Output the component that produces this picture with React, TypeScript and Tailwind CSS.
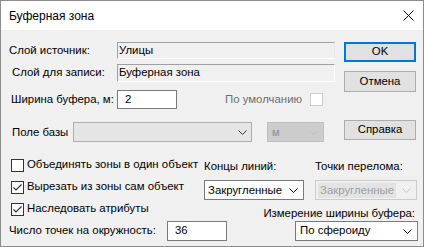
import React from "react";

function Chevron({ className = "" }: { className?: string }) {
  return (
    <svg width="9" height="5" viewBox="0 0 9 5" className={className}>
      <path d="M0.5 0.5 L4.5 4.5 L8.5 0.5" fill="none" stroke="currentColor" strokeWidth="1" />
    </svg>
  );
}

function CheckBox({ checked = false, disabled = false }: { checked?: boolean; disabled?: boolean }) {
  return (
    <span
      className={`flex h-[13px] w-[13px] shrink-0 items-center justify-center border bg-white ${
        disabled ? "border-[#cccccc]" : "border-[#333333]"
      }`}
    >
      {checked && (
        <svg width="11" height="11" viewBox="0 0 11 11">
          <path d="M1.5 5.5 L4 8 L9.5 2.5" fill="none" stroke="#333333" strokeWidth="1.2" />
        </svg>
      )}
    </span>
  );
}

export default function App() {
  return (
    <div
      className="flex h-[247px] w-[424px] flex-col whitespace-nowrap border border-[#8c8c8c] bg-[#f0f0f0] text-[11.4px] leading-none text-black"
      style={{ fontFamily: '"Liberation Sans", Arial, sans-serif' }}
    >
      {/* TITLE BAR */}
      <div className="flex h-[29px] shrink-0 items-center justify-between bg-white pl-[8px] pr-[9px] text-[12px]">
        <span>Буферная зона</span>
        <svg width="11" height="11" viewBox="0 0 11 11">
          <path d="M0.5 0.5 L10.5 10.5 M10.5 0.5 L0.5 10.5" stroke="#000" strokeWidth="1" />
        </svg>
      </div>

      {/* TOP SECTION */}
      <div className="mt-[12px] flex pl-[8px]">
        <div className="flex w-[326px] flex-col">
          <div className="flex h-[17px] items-center">
            <span className="w-[108px] shrink-0">Слой источник:</span>
            <div className="flex h-[17px] w-[218px] items-center border border-b-white border-l-[#a0a0a0] border-r-[#e8e8e8] border-t-[#a0a0a0] pl-[1px]">
              Улицы
            </div>
          </div>
          <div className="mt-[5px] flex h-[18px] items-center">
            <span className="w-[108px] shrink-0 pl-[3px]">Слой для записи:</span>
            <div className="flex h-[18px] w-[218px] items-center border border-b-white border-l-[#a0a0a0] border-r-white border-t-[#a0a0a0] pl-[1px]">
              Буферная зона
            </div>
          </div>
          <div className="mt-[8px] flex h-[19px] items-center">
            <span className="w-[108px] shrink-0 pl-[2px]">Ширина буфера, м:</span>
            <div className="flex h-[19px] w-[60px] items-center border border-[#7a7a7a] bg-white pl-[7px]">2</div>
            <span className="ml-[48px] text-[#6d6d6d]">По умолчанию</span>
            <span className="ml-auto mr-[12px]">
              <CheckBox disabled />
            </span>
          </div>
        </div>
        <div className="ml-[9px] flex flex-col">
          <div className="flex h-[20px] w-[72px] items-center justify-center border-2 border-[#0078d7] bg-[#e1e1e1]">OK</div>
          <div className="mt-[9px] flex h-[21px] w-[72px] items-center justify-center border border-[#adadad] bg-[#e1e1e1]">
            Отмена
          </div>
        </div>
      </div>

      {/* FIELD ROW */}
      <div className="mt-[11px] flex h-[22px] items-start pl-[11px]">
        <span className="mt-[7px] w-[61px] shrink-0">Поле базы</span>
        <div className="mt-[2px] flex h-[20px] w-[179px] items-center justify-end border border-[#adadad] bg-[#e5e5e5] pr-[4px] text-[#333]">
          <Chevron />
        </div>
        <div className="ml-[15px] mt-[2px] flex h-[20px] w-[57px] items-center justify-between border border-[#bfbfbf] bg-[#cccccc] pl-[4px] pr-[5px] text-[#8a8a9a]">
          <span className="text-[11px]">м</span>
          <span className="text-[#bcbcbc]">
            <Chevron />
          </span>
        </div>
        <div className="ml-[20px] flex h-[20px] w-[72px] items-center justify-center border border-[#adadad] bg-[#e1e1e1]">
          Справка
        </div>
      </div>

      {/* OPTIONS */}
      <div className="mt-[12px] flex">
        <div className="flex w-[203px] shrink-0 flex-col pl-[10px]">
          <label className="flex h-[22px] items-center gap-[3px]">
            <CheckBox />
            <span>Объединять зоны в один объект</span>
          </label>
          <label className="flex h-[22px] items-center gap-[3px]">
            <CheckBox checked />
            <span>Вырезать из зоны сам объект</span>
          </label>
          <label className="flex h-[22px] items-center gap-[3px]">
            <CheckBox checked />
            <span>Наследовать атрибуты</span>
          </label>
        </div>
        <div className="flex w-[214px] flex-col">
          <div className="flex">
            <div className="flex w-[111px] shrink-0 flex-col">
              <span className="mt-[7px]">Концы линий:</span>
              <div className="mt-[8px] flex h-[20px] w-[100px] items-center justify-between border border-[#7a7a7a] bg-white pl-[3px] pr-[5px]">
                <span>Закругленные</span>
                <Chevron />
              </div>
            </div>
            <div className="flex flex-col">
              <span className="mt-[7px]">Точки перелома:</span>
              <div className="mt-[8px] flex h-[20px] w-[102px] items-center justify-between border border-[#cccccc] bg-[#f0f0f0] pl-[2px] pr-[5px] text-[#a0a0a0]">
                <span className="bg-[#e3e3e3] px-[2px] py-[2px]">Закругленные</span>
                <span className="text-[#c8c8c8]">
                  <Chevron />
                </span>
              </div>
            </div>
          </div>
          <span className="mt-[8px] self-end pr-[3px]">Измерение ширины буфера:</span>
        </div>
      </div>

      {/* LAST ROW */}
      <div className="mt-[1px] flex h-[20px] items-center pl-[8px]">
        <span className="w-[158px] shrink-0">Число точек на окружность:</span>
        <div className="flex h-[20px] w-[60px] items-center border border-[#7a7a7a] bg-white pl-[7px]">36</div>
        <div className="ml-[68px] flex h-[20px] w-[123px] items-center justify-between border border-[#7a7a7a] bg-white pl-[4px] pr-[5px]">
          <span>По сфероиду</span>
          <Chevron />
        </div>
      </div>
    </div>
  );
}
